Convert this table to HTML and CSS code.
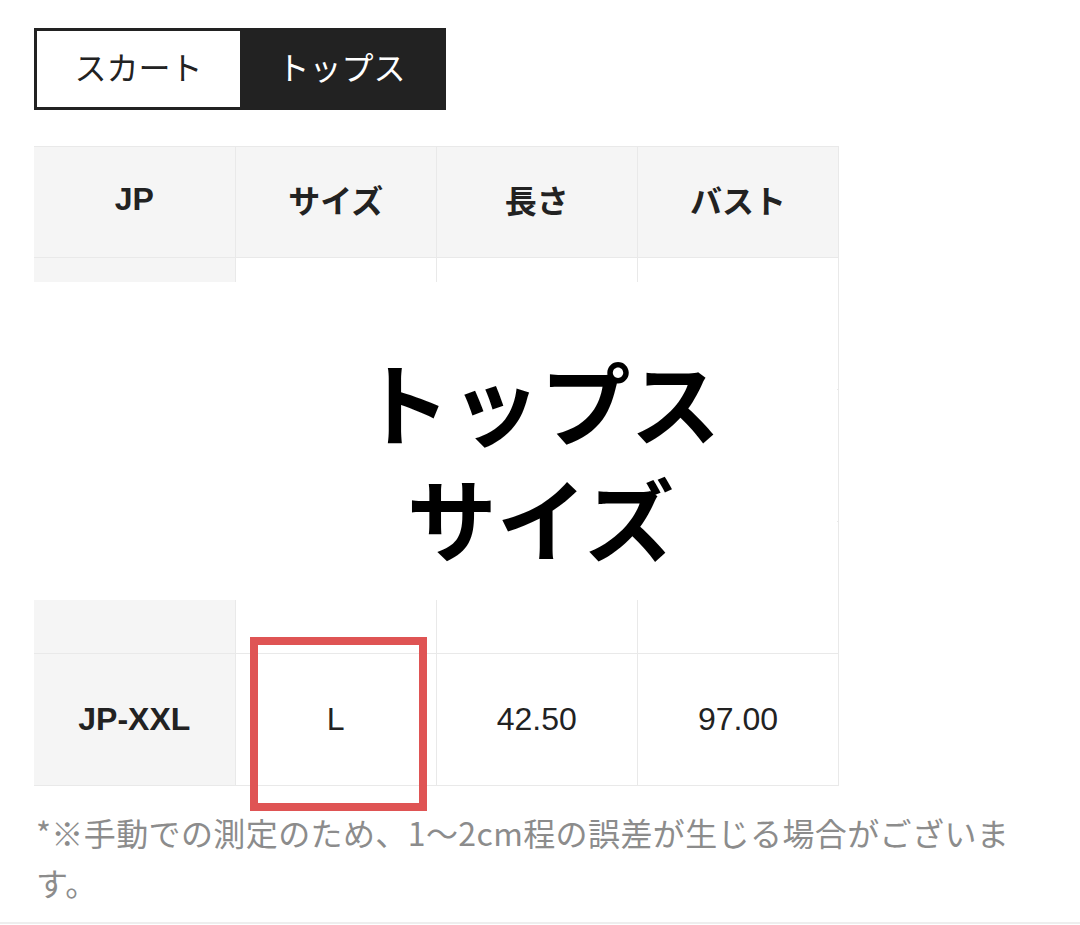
FILE: index.html
```html
<!DOCTYPE html>
<html lang="ja">
<head>
<meta charset="utf-8">
<title>サイズ表</title>
<link rel="stylesheet" href="styles.css">
</head>
<body>
<div class="page">
  <div class="tabs">
    <div class="tab">スカート</div>
    <div class="tab active">トップス</div>
  </div>

  <div class="table-wrap">
    <table class="size-table">
      <thead>
        <tr><th>JP</th><th>サイズ</th><th>長さ</th><th>バスト</th></tr>
      </thead>
      <tbody>
        <tr><th>JP-M</th><td>S</td><td>40.50</td><td>85.00</td></tr>
        <tr><th>JP-L</th><td>M</td><td>41.50</td><td>89.00</td></tr>
        <tr><th>JP-XL</th><td>M</td><td>42.00</td><td>93.00</td></tr>
        <tr><th>JP-XXL</th><td>L</td><td>42.50</td><td>97.00</td></tr>
      </tbody>
    </table>
    <div class="cover">
      <div class="cover-text">
        <div class="cover-line">トップス</div>
        <div class="cover-line">サイズ</div>
      </div>
    </div>
    <div class="highlight"></div>
  </div>

  <p class="note">*※手動での測定のため、1～2cm程の誤差が生じる場合がございます。</p>
</div>
</body>
</html>
```

FILE: styles.css
```css
html, body {
  margin: 0;
  padding: 0;
  background: #fff;
}

body {
  font-family: "Liberation Sans", "Noto Sans CJK JP", sans-serif;
  color: #222;
}

.page {
  padding: 28px 34px 0 34px;
  border-bottom: 2px solid #eeeeee;
  height: 894px;
  box-sizing: content-box;
}

.tabs {
  display: flex;
  width: 412px;
  height: 82px;
  box-sizing: border-box;
  border: 3px solid #222;
}

.tab {
  flex: 1;
  display: flex;
  align-items: center;
  justify-content: center;
  padding-bottom: 6px;
  font-family: "Noto Sans CJK JP", sans-serif;
  font-size: 32px;
  font-weight: 400;
  color: #222;
  background: #fff;
}

.tab.active {
  background: #222;
  color: #fff;
}

.table-wrap {
  position: relative;
  width: 805px;
  margin-top: 36px;
}

.size-table {
  border-collapse: collapse;
  width: 805px;
  table-layout: fixed;
  font-size: 32px;
}

.size-table th,
.size-table td {
  border: 1px solid #e9e9e9;
  text-align: center;
  vertical-align: middle;
  padding: 0;
}

.size-table tr > :first-child {
  border-left: none;
}

.size-table thead th {
  height: 104px;
  padding-bottom: 6px;
  background: #f5f5f5;
  font-weight: 700;
  color: #222;
}

.size-table tbody tr {
  height: 132px;
}

.size-table tbody th {
  background: #f5f5f5;
  font-weight: 700;
}

.size-table tbody td {
  background: #fff;
  font-weight: 400;
}

.cover {
  position: absolute;
  left: 0;
  top: 136px;
  width: 803px;
  height: 318px;
  background: #fff;
  box-sizing: border-box;
  padding: 60px 0 0 210px;
  display: flex;
  justify-content: center;
}

.cover-text {
  font-family: "Noto Sans CJK JP", sans-serif;
  font-weight: 700;
  font-size: 90px;
  line-height: 116px;
  text-align: center;
  color: #000;
}

.cover-line {
  height: 116px;
}

.highlight {
  position: absolute;
  left: 216px;
  top: 491px;
  width: 177px;
  height: 174px;
  box-sizing: border-box;
  border: 8px solid #df5454;
}

.note {
  margin: 21px 0 0 2px;
  width: 1000px;
  font-family: "Noto Sans CJK JP", sans-serif;
  font-size: 32px;
  line-height: 50px;
  letter-spacing: 0.4px;
  color: #8c8c8c;
}
```
